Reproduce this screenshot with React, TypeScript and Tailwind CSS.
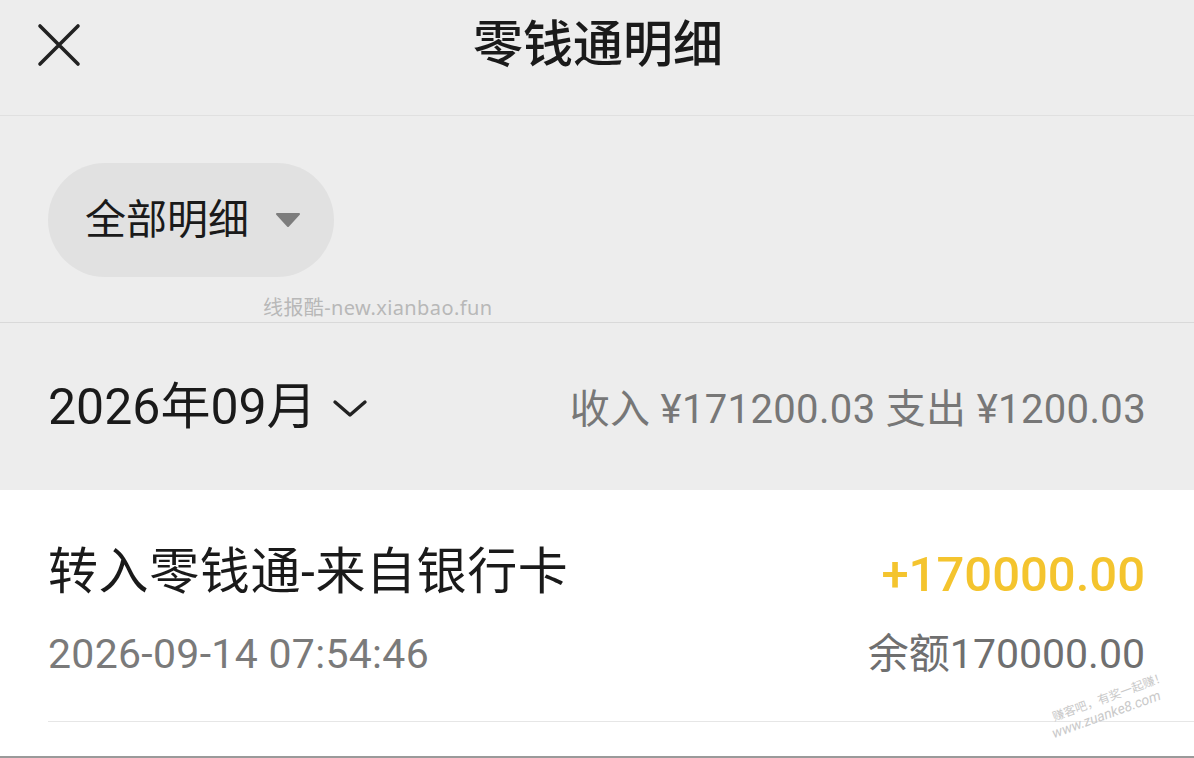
const font = "font-['Roboto','Noto_Sans_CJK_SC',sans-serif]"

function CloseIcon() {
  return (
    <svg width="44" height="44" viewBox="0 0 44 44" className="text-[#222]">
      <path d="M3 3 L41 41 M41 3 L3 41" stroke="currentColor" strokeWidth="3.6" strokeLinecap="round" />
    </svg>
  )
}

export default function App() {
  return (
    <div className={`w-[1194px] h-[758px] overflow-hidden bg-[#ededed] ${font} relative`}>
      {/* header */}
      <div className="h-[116px] border-b border-[#e0e0e0]">
        <div className="h-[90px] flex items-center relative">
          <div className="absolute left-[37px] top-[23px]">
            <CloseIcon />
          </div>
          <div className="w-full text-center text-[50px] font-medium text-[#1a1a1a] leading-none pl-[2px]">零钱通明细</div>
        </div>
      </div>

      {/* filter */}
      <div className="h-[207px] border-b border-[#d9d9d9] pt-[47px] px-[48px] relative">
        <div className="w-[286px] h-[114px] rounded-full bg-[#e1e1e1] flex items-center pl-[37px] gap-[26px]">
          <span className="text-[41px] text-[#1a1a1a] leading-none">全部明细</span>
          <svg width="26" height="18" viewBox="0 0 26 18">
            <path d="M2 3 L24 3 L13 15 Z" fill="#7d7d7d" stroke="#7d7d7d" strokeWidth="2" strokeLinejoin="round" />
          </svg>
        </div>
        <div className="absolute left-[263px] top-[182px] font-['Noto_Sans','Noto_Sans_CJK_SC',sans-serif] text-[20px] tracking-[0.4px] text-[#b8b8b8] leading-none">线报酷-new.xianbao.fun</div>
      </div>

      {/* month */}
      <div className="h-[167px] flex items-center justify-between px-[48px]">
        <div className="flex items-center gap-[15px]">
          <span className="text-[50px] text-[#1a1a1a] leading-none">2026年09月</span>
          <svg width="36" height="20" viewBox="0 0 36 20" className="mt-[2px]">
            <path d="M3 4 L18 17 L33 4" fill="none" stroke="#222" strokeWidth="3.4" strokeLinecap="round" strokeLinejoin="round" />
          </svg>
        </div>
        <div className="text-[40px] text-[#777] leading-none pt-[6px] tracking-[0.35px]">收入 ¥171200.03 支出 ¥1200.03</div>
      </div>

      {/* list */}
      <div className="bg-white h-[268px] relative">
        <div className="pl-[48px]">
          <div className="flex justify-between pr-[49px] pt-[52px] border-b border-[#e6e6e6] pb-[42px]">
            <div className="flex flex-col">
              <span className="text-[50px] text-[#1a1a1a] leading-[60px] tracking-[0.6px]">转入零钱通-来自银行卡</span>
              <span className="text-[41px] text-[#7a7a7a] leading-[50px] mt-[27px] tracking-[0.3px]">2026-09-14 07:54:46</span>
            </div>
            <div className="flex flex-col items-end">
              <span className="text-[49px] font-medium text-[#f4c42e] leading-[60px] mt-[3px]">+170000.00</span>
              <span className="text-[41px] text-[#6f6f6f] leading-[50px] mt-[24px]">余额170000.00</span>
            </div>
          </div>
        </div>
        <div className="absolute left-[1050px] top-[222px] -rotate-[20deg] origin-left text-[#c9c9c9] leading-[15px]">
          <div className="text-[12px] pl-[6px]">赚客吧，有奖一起赚！</div>
          <div className="text-[14px] italic">www.zuanke8.com</div>
        </div>
        <div className="absolute left-0 right-0 bottom-0 h-[2px] bg-[#9a9a9a]" />
      </div>
    </div>
  )
}
